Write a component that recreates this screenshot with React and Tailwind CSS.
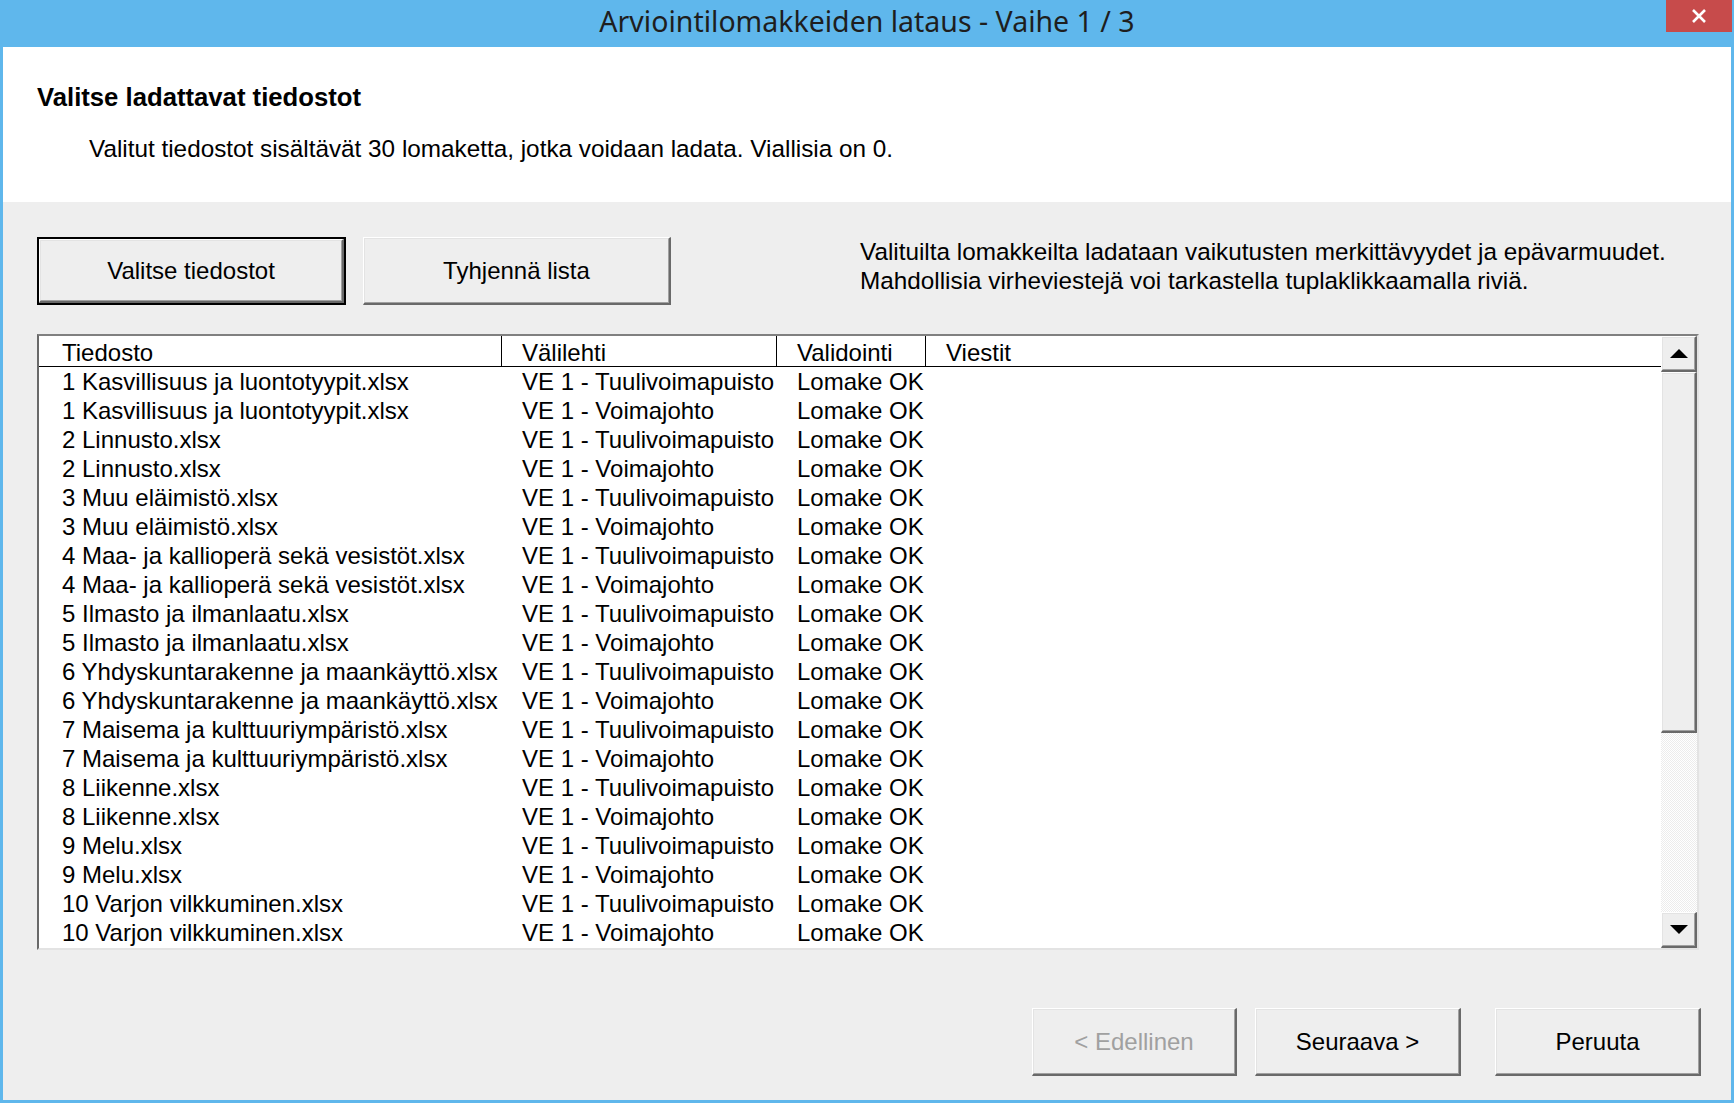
import React from "react";

const rows = [
  ["1 Kasvillisuus ja luontotyypit.xlsx", "VE 1 - Tuulivoimapuisto"],
  ["1 Kasvillisuus ja luontotyypit.xlsx", "VE 1 - Voimajohto"],
  ["2 Linnusto.xlsx", "VE 1 - Tuulivoimapuisto"],
  ["2 Linnusto.xlsx", "VE 1 - Voimajohto"],
  ["3 Muu eläimistö.xlsx", "VE 1 - Tuulivoimapuisto"],
  ["3 Muu eläimistö.xlsx", "VE 1 - Voimajohto"],
  ["4 Maa- ja kallioperä sekä vesistöt.xlsx", "VE 1 - Tuulivoimapuisto"],
  ["4 Maa- ja kallioperä sekä vesistöt.xlsx", "VE 1 - Voimajohto"],
  ["5 Ilmasto ja ilmanlaatu.xlsx", "VE 1 - Tuulivoimapuisto"],
  ["5 Ilmasto ja ilmanlaatu.xlsx", "VE 1 - Voimajohto"],
  ["6 Yhdyskuntarakenne ja maankäyttö.xlsx", "VE 1 - Tuulivoimapuisto"],
  ["6 Yhdyskuntarakenne ja maankäyttö.xlsx", "VE 1 - Voimajohto"],
  ["7 Maisema ja kulttuuriympäristö.xlsx", "VE 1 - Tuulivoimapuisto"],
  ["7 Maisema ja kulttuuriympäristö.xlsx", "VE 1 - Voimajohto"],
  ["8 Liikenne.xlsx", "VE 1 - Tuulivoimapuisto"],
  ["8 Liikenne.xlsx", "VE 1 - Voimajohto"],
  ["9 Melu.xlsx", "VE 1 - Tuulivoimapuisto"],
  ["9 Melu.xlsx", "VE 1 - Voimajohto"],
  ["10 Varjon vilkkuminen.xlsx", "VE 1 - Tuulivoimapuisto"],
  ["10 Varjon vilkkuminen.xlsx", "VE 1 - Voimajohto"],
];

function Bevel({ children, className = "" }) {
  return (
    <div className={"border-t border-l border-t-white border-l-white border-r-2 border-b-2 border-r-[#696969] border-b-[#696969] " + className}>
      <div className="w-full h-full border-t border-l border-t-[#e3e3e3] border-l-[#e3e3e3] border-r border-b border-r-[#a0a0a0] border-b-[#a0a0a0] bg-[#eeeeee] flex items-center justify-center">
        {children}
      </div>
    </div>
  );
}

function Button({ children, w, def, disabled }) {
  const text = (
    <span className={disabled ? "text-[#a0a0a0] text-[24px]" : "text-black text-[24px]"}>{children}</span>
  );
  if (def) {
    return (
      <div className={"h-[68px] border-2 border-black " + w}>
        <Bevel className="w-full h-full">{text}</Bevel>
      </div>
    );
  }
  return <Bevel className={"h-[68px] " + w}>{text}</Bevel>;
}

function ArrowUp() {
  return (
    <svg width="18" height="9" viewBox="0 0 18 9">
      <polygon points="9,0 18,9 0,9" fill="#000" />
    </svg>
  );
}
function ArrowDown() {
  return (
    <svg width="18" height="9" viewBox="0 0 18 9">
      <polygon points="0,0 18,0 9,9" fill="#000" />
    </svg>
  );
}

export default function App() {
  return (
    <div
      className="w-[1734px] h-[1103px] bg-[#5fb7ec] flex flex-col overflow-hidden"
      style={{ fontFamily: '"Liberation Sans", Arial, sans-serif' }}
    >
      {/* Title bar */}
      <div className="h-[47px] relative flex justify-center shrink-0">
        <div
          className="pt-[2px] text-[28.5px] leading-[38px] text-[#1e1e1e]"
          style={{ fontFamily: '"Noto Sans", "Open Sans", sans-serif' }}
        >
          Arviointilomakkeiden lataus - Vaihe 1 / 3
        </div>
        <div className="absolute top-0 right-[2px] w-[66px] h-[32px] bg-[#c74b4b] flex items-center justify-center">
          <svg width="16" height="14" viewBox="0 0 16 14">
            <path d="M2 1 L14 13 M14 1 L2 13" stroke="#fff" strokeWidth="2.6" />
          </svg>
        </div>
      </div>

      {/* Body */}
      <div className="flex-1 mx-[3px] mb-[3px] bg-[#eeeeee] flex flex-col text-black">
        {/* White header */}
        <div className="h-[155px] bg-white pl-[34px] pt-[35px] shrink-0">
          <div className="text-[25.7px] leading-[30px] font-bold">Valitse ladattavat tiedostot</div>
          <div className="mt-[22px] ml-[52px] text-[24.3px] leading-[29px]">
            Valitut tiedostot sisältävät 30 lomaketta, jotka voidaan ladata. Viallisia on 0.
          </div>
        </div>

        {/* Buttons row */}
        <div className="flex items-start pl-[34px] pt-[35px]">
          <Button w="w-[309px]" def>
            Valitse tiedostot
          </Button>
          <div className="ml-[17px]">
            <Button w="w-[308px]">Tyhjennä lista</Button>
          </div>
          <div className="ml-[189px] text-[24.3px] leading-[29px]">
            <div>Valituilta lomakkeilta ladataan vaikutusten merkittävyydet ja epävarmuudet.</div>
            <div>Mahdollisia virheviestejä voi tarkastella tuplaklikkaamalla riviä.</div>
          </div>
        </div>

        {/* List box */}
        <div className="ml-[34px] mt-[29px] w-[1662px] h-[616px] border-t-2 border-l-2 border-t-[#808080] border-l-[#696969] border-r-2 border-b-2 border-r-[#e3e3e3] border-b-[#e3e3e3] bg-white flex">
          <div className="flex-1 flex flex-col text-[24px]">
            <div className="h-[31px] border-b border-black grid grid-cols-[463px_275px_149px_1fr]">
              <div className="border-r border-black pl-[23px] pt-[4px] leading-[25px]">Tiedosto</div>
              <div className="border-r border-black pl-[20px] pt-[4px] leading-[25px]">Välilehti</div>
              <div className="border-r border-black pl-[20px] pt-[4px] leading-[25px]">Validointi</div>
              <div className="pl-[20px] pt-[4px] leading-[25px]">Viestit</div>
            </div>
            {rows.map((r, i) => (
              <div key={i} className="h-[29px] grid grid-cols-[463px_275px_149px_1fr] whitespace-nowrap">
                <div className="pl-[23px] pt-[2px] leading-[26px]">{r[0]}</div>
                <div className="pl-[20px] pt-[2px] leading-[26px]">{r[1]}</div>
                <div className="pl-[20px] pt-[2px] leading-[26px]">Lomake OK</div>
                <div></div>
              </div>
            ))}
          </div>
          {/* Scrollbar */}
          <div className="w-[36px] flex flex-col">
            <Bevel className="h-[36px] shrink-0">
              <ArrowUp />
            </Bevel>
            <Bevel className="h-[361px] shrink-0">
              <span></span>
            </Bevel>
            <div className="flex-1 bg-[repeating-conic-gradient(#ffffff_0%_25%,#ececec_0%_50%)] bg-[length:2px_2px]"></div>
            <Bevel className="h-[36px] shrink-0">
              <ArrowDown />
            </Bevel>
          </div>
        </div>

        {/* Bottom buttons */}
        <div className="mt-auto pb-[24px] pr-[30px] flex justify-end">
          <Button w="w-[205px]" disabled>
            &lt; Edellinen
          </Button>
          <div className="ml-[18px]">
            <Button w="w-[206px]">Seuraava &gt;</Button>
          </div>
          <div className="ml-[34px]">
            <Button w="w-[206px]">Peruuta</Button>
          </div>
        </div>
      </div>
    </div>
  );
}
